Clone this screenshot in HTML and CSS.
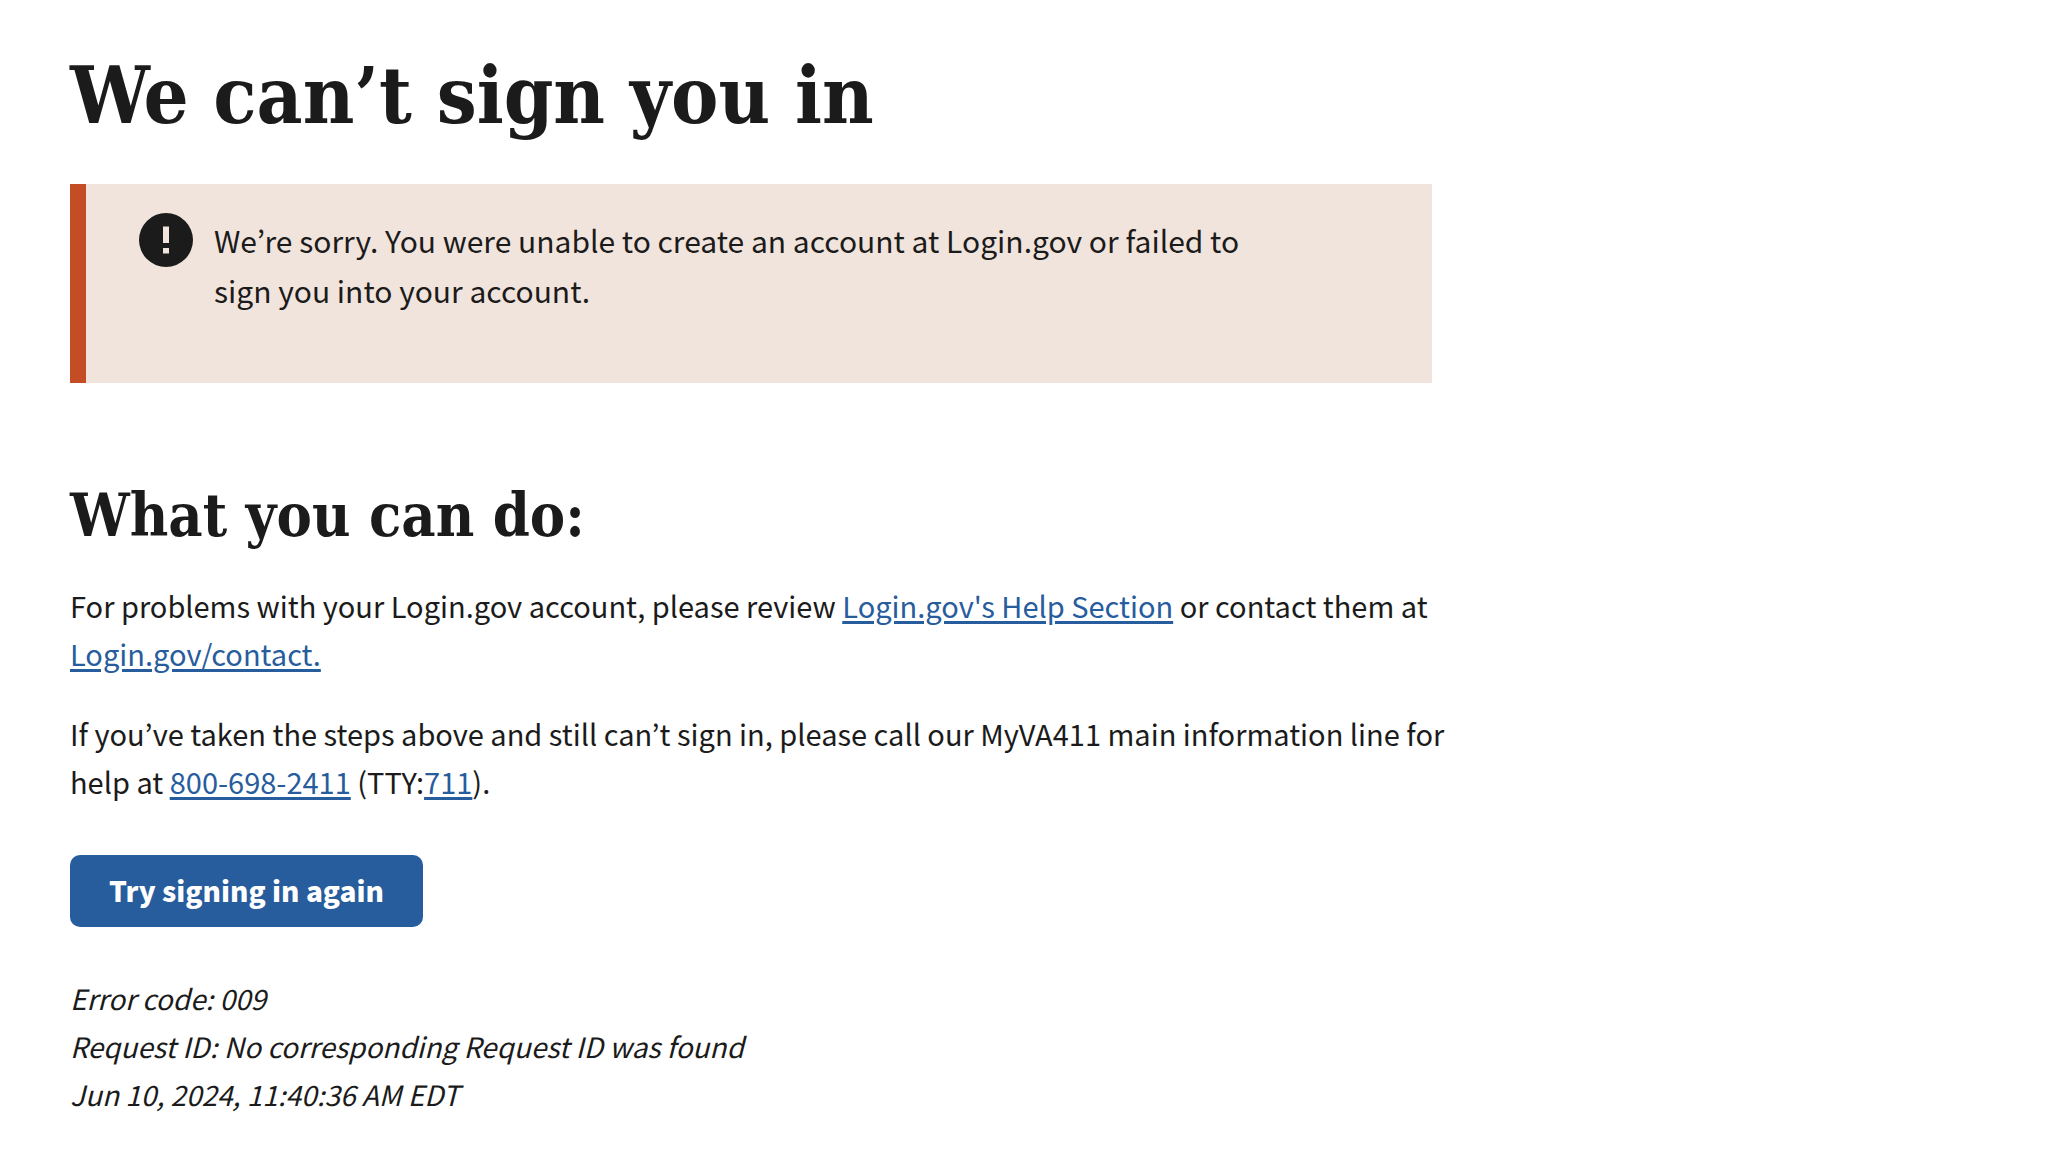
FILE: index.html
```html
<!DOCTYPE html>
<html lang="en">
<head>
<meta charset="utf-8">
<meta name="viewport" content="width=device-width, initial-scale=1">
<title>We can’t sign you in</title>
<link rel="stylesheet" href="styles.css">
</head>
<body>
<main class="page">
  <h1 class="title">We can’t sign you in</h1>
  <div class="alert" role="alert">
    <svg class="alert-icon" viewBox="0 0 54 54" aria-hidden="true">
      <path fill="currentColor" fill-rule="evenodd" d="M27 0a27 27 0 1 1 0 54a27 27 0 1 1 0-54zM24 13.500v16.500h6v-16.500zM24 35v5.500h6v-5.500z"/>
    </svg>
    <p class="alert-text">We’re sorry. You were unable to create an account at Login.gov or failed to sign you into your account.</p>
  </div>
  <h2 class="subtitle">What you can do:</h2>
  <p class="text">For problems with your Login.gov account, please review <a class="link" href="#help">Login.gov's Help Section</a> or contact them at <a class="link" href="#contact">Login.gov/contact.</a></p>
  <p class="text">If you’ve taken the steps above and still can’t sign in, please call our MyVA411 main information line for help at <a class="link" href="tel:8006982411">800-698-2411</a> (TTY:<a class="link" href="tel:711">711</a>).</p>
  <button class="button" type="button">Try signing in again</button>
  <p class="details">Error code: 009<br>Request ID: No corresponding Request ID was found<br>Jun 10, 2024, 11:40:36 AM EDT</p>
</main>
</body>
</html>
```

FILE: styles.css
```css
* {
  box-sizing: border-box;
}

body {
  margin: 0;
  background: #fff;
  color: #1b1b1b;
  font-family: "Noto Sans CJK KR", "Noto Sans", sans-serif;
  font-size: 28px;
  line-height: 48px;
}

.page {
  max-width: 1530px;
  padding: 48px 70px;
}

.title,
.subtitle {
  margin: 0;
  font-family: "DejaVu Serif Condensed", "DejaVu Serif", serif;
  font-weight: 700;
}

.title {
  font-size: 79px;
  line-height: 96px;
}

.subtitle {
  margin-top: 101px;
  margin-bottom: 33px;
  font-size: 59px;
  line-height: 64px;
}

.alert {
  display: flex;
  align-items: flex-start;
  gap: 21px;
  max-width: 1362px;
  margin-top: 40px;
  padding: 29px 160px 68px 53px;
  border-left: 16px solid #c44d25;
  background: #f1e4dc;
}

.alert-icon {
  flex: none;
  width: 54px;
  height: 54px;
}

.alert-text {
  margin: 2px 0 0;
  font-size: 30px;
  line-height: 50px;
}

.text {
  margin: 0 0 32px;
  font-size: 29px;
}

.link {
  color: #275c9d;
  text-decoration: underline;
  text-decoration-thickness: 3px;
  text-underline-offset: 3px;
}

.button {
  display: block;
  margin: 50px 0 47px;
  padding: 11px 39px 13px;
  border: 0;
  border-radius: 10px;
  background: #275c9d;
  color: #fff;
  font: inherit;
  font-weight: 900;
}

.details {
  margin: 0;
  font-style: italic;
}
```
